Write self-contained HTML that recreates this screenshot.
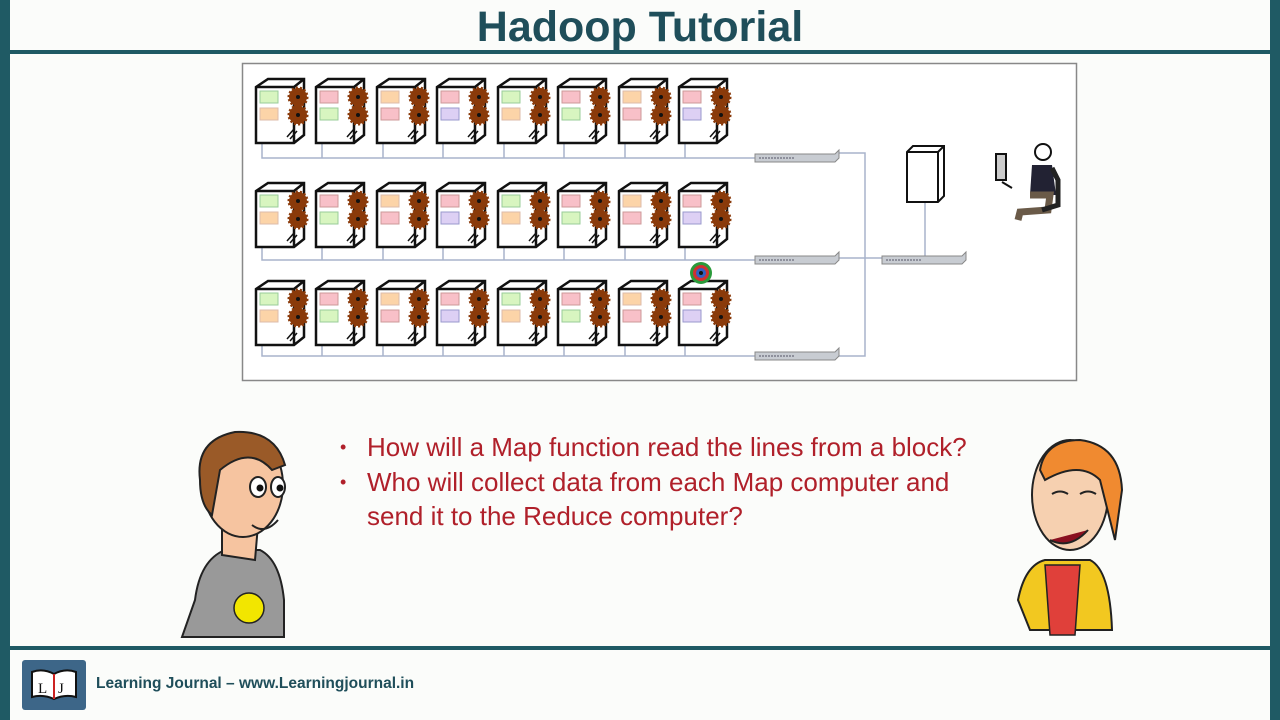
<!DOCTYPE html>
<html><head><style>
body{margin:0;width:1280px;height:720px;background:#fbfcfa;position:relative;overflow:hidden;font-family:"Liberation Sans",sans-serif}
.bl{position:absolute;top:0;bottom:0;width:10px;background:#1f5a64}
h1{position:absolute;top:3px;left:0;width:1280px;text-align:center;margin:0;font-size:43px;color:#1f4e5a;font-weight:bold;letter-spacing:0}
.hl{position:absolute;left:10px;right:10px;height:4px;background:#1f5a64}
ul{position:absolute;left:340px;top:430px;margin:0;padding:0;list-style:none;color:#b0202a;font-size:26px;line-height:34.5px}
li{padding-left:27px;position:relative}
li:before{content:"•";position:absolute;left:0;font-size:18px}
.ft{position:absolute;left:96px;top:675px;font-size:15.5px;font-weight:bold;color:#1f4e5a}
</style></head><body>
<div class="bl" style="left:0"></div><div class="bl" style="right:0"></div>
<h1>Hadoop Tutorial</h1>
<div class="hl" style="top:50px"></div>
<div class="hl" style="top:646px"></div>
<svg width="1280" height="720" style="position:absolute;left:0;top:0">
<defs>
<g id="gear"><circle r="9" fill="#8a3a0a" stroke="#8a3a0a" stroke-width="3" stroke-dasharray="2 2"/><circle r="2" fill="#111"/></g>
<g id="srv"><path d="M2 10 L14 2 L50 2 L50 58 L40 66 L2 66 Z M2 10 L40 10 L50 2 M40 10 L40 66" fill="#fff" stroke="#111" stroke-width="2.5"/><line x1="33" y1="60" x2="40" y2="52" stroke="#111" stroke-width="1.5"/><line x1="36" y1="62" x2="43" y2="54" stroke="#111" stroke-width="1.5"/></g>
<g id="sw"><path d="M0 4 L80 4 L84 0 L84 8 L80 12 L0 12 Z" fill="#c8ccd2" stroke="#888" stroke-width="1"/><line x1="4" y1="8" x2="40" y2="8" stroke="#556" stroke-dasharray="2 1"/></g>
</defs>
<rect x="242.5" y="63.5" width="834" height="317" fill="#fff" stroke="#888" stroke-width="1.5"/>
<g stroke="#a8b4cc" stroke-width="1.5" fill="none">
<path d="M262 143v15h496M322 143v15M383 143v15M443 143v15M504 143v15M564 143v15M625 143v15M685 143v15"/>
<path d="M262 245v15h496M322 245v15M383 245v15M443 245v15M504 245v15M564 245v15M625 245v15M685 245v15"/>
<path d="M262 343v13h496M322 343v13M383 343v13M443 343v13M504 343v13M564 343v13M625 343v13M685 343v13"/>
<path d="M838 153h27v203h-27M838 258h44M925 202v56"/>
</g>
<g id="row">
<g transform="translate(254,77)"><use href="#srv"/><rect x="6" y="14" width="18" height="12" fill="#d8f5c0" stroke="#9c9"/><rect x="6" y="31" width="18" height="12" fill="#fcd4a8" stroke="#dba"/><use href="#gear" x="44" y="20"/><use href="#gear" x="44" y="38"/></g>
<g transform="translate(314,77)"><use href="#srv"/><rect x="6" y="14" width="18" height="12" fill="#f8c0c8" stroke="#c99"/><rect x="6" y="31" width="18" height="12" fill="#d8f5c0" stroke="#9c9"/><use href="#gear" x="44" y="20"/><use href="#gear" x="44" y="38"/></g>
<g transform="translate(375,77)"><use href="#srv"/><rect x="6" y="14" width="18" height="12" fill="#fcd4a8" stroke="#dba"/><rect x="6" y="31" width="18" height="12" fill="#f8c0c8" stroke="#c99"/><use href="#gear" x="44" y="20"/><use href="#gear" x="44" y="38"/></g>
<g transform="translate(435,77)"><use href="#srv"/><rect x="6" y="14" width="18" height="12" fill="#f8c0c8" stroke="#c99"/><rect x="6" y="31" width="18" height="12" fill="#ddd0f4" stroke="#99c"/><use href="#gear" x="44" y="20"/><use href="#gear" x="44" y="38"/></g>
<g transform="translate(496,77)"><use href="#srv"/><rect x="6" y="14" width="18" height="12" fill="#d8f5c0" stroke="#9c9"/><rect x="6" y="31" width="18" height="12" fill="#fcd4a8" stroke="#dba"/><use href="#gear" x="44" y="20"/><use href="#gear" x="44" y="38"/></g>
<g transform="translate(556,77)"><use href="#srv"/><rect x="6" y="14" width="18" height="12" fill="#f8c0c8" stroke="#c99"/><rect x="6" y="31" width="18" height="12" fill="#d8f5c0" stroke="#9c9"/><use href="#gear" x="44" y="20"/><use href="#gear" x="44" y="38"/></g>
<g transform="translate(617,77)"><use href="#srv"/><rect x="6" y="14" width="18" height="12" fill="#fcd4a8" stroke="#dba"/><rect x="6" y="31" width="18" height="12" fill="#f8c0c8" stroke="#c99"/><use href="#gear" x="44" y="20"/><use href="#gear" x="44" y="38"/></g>
<g transform="translate(677,77)"><use href="#srv"/><rect x="6" y="14" width="18" height="12" fill="#f8c0c8" stroke="#c99"/><rect x="6" y="31" width="18" height="12" fill="#ddd0f4" stroke="#99c"/><use href="#gear" x="44" y="20"/><use href="#gear" x="44" y="38"/></g>
</g>
<use href="#row" y="104"/><use href="#row" y="202"/>
<use href="#sw" x="755" y="150"/><use href="#sw" x="755" y="252"/><use href="#sw" x="755" y="348"/><use href="#sw" x="882" y="252"/>
<path d="M907 152 L913 146 L944 146 L944 196 L938 202 L907 202 Z M907 152 L938 152 L944 146 M938 152 L938 202" fill="#fff" stroke="#111" stroke-width="2"/>
<circle cx="701" cy="273" r="11" fill="#2a9a3a"/><circle cx="701" cy="273" r="8" fill="#d03030"/><circle cx="701" cy="273" r="5" fill="#3060c0"/><circle cx="701" cy="273" r="2" fill="#111"/>
<g stroke="#111" stroke-width="2" fill="none"><rect x="996" y="154" width="10" height="26" fill="#ccc"/><path d="M1002 182 l10 6"/></g>
<circle cx="1043" cy="152" r="8" fill="#fff" stroke="#111" stroke-width="2"/>
<path d="M1032 165 L1052 165 L1056 195 L1030 195 Z" fill="#223" />
<path d="M1030 195 L1050 195 L1048 210 L1020 212 L1018 220" fill="none" stroke="#6a5a48" stroke-width="7"/>
<path d="M1052 168 L1058 180 L1058 205 L1042 210" fill="none" stroke="#222" stroke-width="5"/>
<path d="M195 600 Q200 560 225 550 L260 550 Q280 560 284 600 L284 637 L182 637 Z" fill="#999" stroke="#222" stroke-width="2"/>
<circle cx="249" cy="608" r="15" fill="#f2e600" stroke="#222" stroke-width="1.5"/>
<path d="M222 520 L222 555 L255 560 L258 525 Z" fill="#f6c4a0" stroke="#222" stroke-width="2"/>
<ellipse cx="243" cy="485" rx="40" ry="52" fill="#f6c4a0" stroke="#222" stroke-width="2"/>
<path d="M200 480 Q195 440 235 432 Q275 430 285 465 L272 470 Q250 445 220 470 L212 515 Q200 505 200 480Z" fill="#9a5a28" stroke="#222" stroke-width="2"/>
<ellipse cx="258" cy="487" rx="8" ry="10" fill="#fff" stroke="#222" stroke-width="2"/><circle cx="260" cy="488" r="3.5" fill="#111"/>
<ellipse cx="278" cy="487" rx="7" ry="10" fill="#fff" stroke="#222" stroke-width="2"/><circle cx="280" cy="488" r="3.5" fill="#111"/>
<path d="M252 525 Q265 535 278 520" fill="none" stroke="#222" stroke-width="2"/>
<path d="M1018 600 Q1025 565 1045 560 L1090 560 Q1110 570 1112 630 L1030 630 Z" fill="#f2c820" stroke="#222" stroke-width="2"/>
<path d="M1045 565 L1080 565 L1075 635 L1050 635 Z" fill="#e0403a" stroke="#222" stroke-width="1.5"/>
<ellipse cx="1070" cy="495" rx="38" ry="55" fill="#f6d0b0" stroke="#222" stroke-width="2"/>
<path d="M1040 470 Q1045 440 1080 440 Q1120 445 1122 490 L1115 540 L1100 480 Q1080 460 1045 480 Z" fill="#f08a30" stroke="#222" stroke-width="2"/>
<path d="M1050 540 Q1070 550 1088 530" fill="#8a1020" stroke="#222" stroke-width="2"/>
<path d="M1052 494 q8 -5 16 0 M1080 494 q8 -5 16 0" stroke="#222" stroke-width="2" fill="none"/>
<rect x="22" y="660" width="64" height="50" rx="3" fill="#3d6688"/>
<path d="M32 672 Q43 668 54 674 Q65 668 76 672 L76 697 Q65 694 54 699 Q43 694 32 697 Z" fill="#fff" stroke="#111" stroke-width="2"/>
<line x1="54" y1="674" x2="54" y2="699" stroke="#c22" stroke-width="2"/>
<text x="38" y="693" font-family="Liberation Serif" font-size="15" fill="#111">L</text>
<text x="58" y="693" font-family="Liberation Serif" font-size="15" fill="#111">J</text>
</svg>
<ul><li>How will a Map function read the lines from a block?</li><li>Who will collect data from each Map computer and<br>send it to the Reduce computer?</li></ul>
<div class="ft">Learning Journal – www.Learningjournal.in</div>
</body></html>
